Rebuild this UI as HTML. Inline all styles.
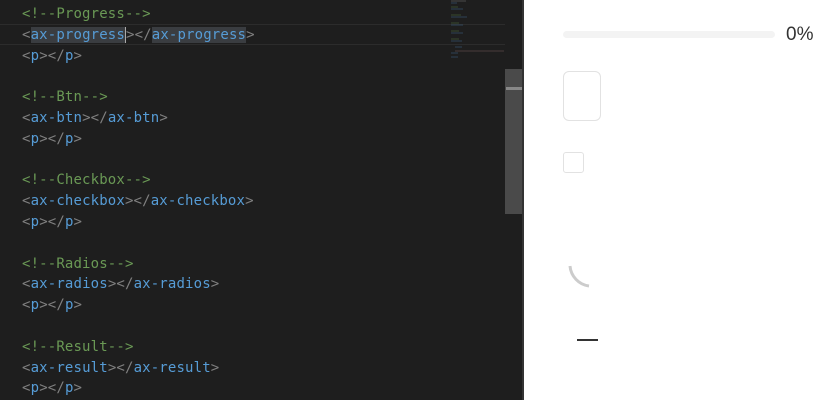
<!DOCTYPE html><html><head><style>
body{margin:0;width:840px;height:400px;background:#fff;position:relative;overflow:hidden;font-family:"DejaVu Sans Mono",monospace}
#ed{position:absolute;left:0;top:0;width:522px;height:400px;background:#1e1e1e}
.cl{position:absolute;left:0;top:24px;width:505px;height:19px;border-top:1px solid #2c2c2c;border-bottom:1px solid #2c2c2c}
pre{position:absolute;left:22px;top:4px;margin:0;font-size:14px;letter-spacing:0.15px;line-height:20.8px;color:#808080;font-family:"DejaVu Sans Mono",monospace}
.c{color:#6a9955}.t{color:#569cd6}.s{background:#3a3d41}
#sb{position:absolute;left:505px;top:69px;width:17px;height:145px;background:#4a4a4a}
#dv{position:absolute;left:522px;top:0;width:2px;height:400px;background:#333}
</style></head><body>
<div id="ed"><div class="cl"></div>
<pre><span class="c">&lt;!--Progress--&gt;</span>
&lt;<span class="t s">ax-progress</span><span style="border-left:1px solid #aaa">&gt;</span>&lt;/<span class="t s">ax-progress</span>&gt;
&lt;<span class="t">p</span>&gt;&lt;/<span class="t">p</span>&gt;

<span class="c">&lt;!--Btn--&gt;</span>
&lt;<span class="t">ax-btn</span>&gt;&lt;/<span class="t">ax-btn</span>&gt;
&lt;<span class="t">p</span>&gt;&lt;/<span class="t">p</span>&gt;

<span class="c">&lt;!--Checkbox--&gt;</span>
&lt;<span class="t">ax-checkbox</span>&gt;&lt;/<span class="t">ax-checkbox</span>&gt;
&lt;<span class="t">p</span>&gt;&lt;/<span class="t">p</span>&gt;

<span class="c">&lt;!--Radios--&gt;</span>
&lt;<span class="t">ax-radios</span>&gt;&lt;/<span class="t">ax-radios</span>&gt;
&lt;<span class="t">p</span>&gt;&lt;/<span class="t">p</span>&gt;

<span class="c">&lt;!--Result--&gt;</span>
&lt;<span class="t">ax-result</span>&gt;&lt;/<span class="t">ax-result</span>&gt;
&lt;<span class="t">p</span>&gt;&lt;/<span class="t">p</span>&gt;</pre>
<svg style="position:absolute;left:440px;top:0" width="65" height="60" opacity="0.6">
<g stroke-width="1">
<line x1="11" y1="1" x2="26" y2="1" stroke="#666"/>
<line x1="11" y1="3" x2="17" y2="3" stroke="#3a5a7a"/>
<line x1="11" y1="7" x2="18" y2="7" stroke="#4a6a3a"/>
<line x1="11" y1="9" x2="23" y2="9" stroke="#3a5a7a"/>
<line x1="11" y1="15" x2="21" y2="15" stroke="#4a6a3a"/>
<line x1="11" y1="17" x2="27" y2="17" stroke="#3a5a7a"/>
<line x1="11" y1="23" x2="19" y2="23" stroke="#4a6a3a"/>
<line x1="11" y1="25" x2="23" y2="25" stroke="#3a5a7a"/>
<line x1="11" y1="31" x2="19" y2="31" stroke="#4a6a3a"/>
<line x1="11" y1="33" x2="23" y2="33" stroke="#3a5a7a"/>
<line x1="11" y1="39" x2="19" y2="39" stroke="#4a6a3a"/>
<line x1="11" y1="41" x2="22" y2="41" stroke="#3a5a7a"/>
<line x1="15" y1="47" x2="22" y2="47" stroke="#3a5a7a"/>
<line x1="15" y1="51" x2="64" y2="51" stroke="#6a5050"/>
<line x1="11" y1="53" x2="18" y2="53" stroke="#3a5a7a"/>
<line x1="11" y1="57" x2="18" y2="57" stroke="#3a5a7a"/>
</g></svg>
</div>
<div id="sb"><div style="position:absolute;left:1px;top:18px;width:16px;height:3px;background:#888"></div></div>
<div id="dv"></div>
<div style="position:absolute;left:563px;top:31px;width:212px;height:7px;border-radius:4px;background:#f3f3f3"></div>
<div style="position:absolute;left:786px;top:24px;font:19px 'Liberation Sans',sans-serif;color:#333">0%</div>
<div style="position:absolute;left:563px;top:71px;width:36px;height:48px;border:1px solid #e2e2e2;border-radius:6px"></div>
<div style="position:absolute;left:563px;top:152px;width:19px;height:19px;border:1px solid #e2e2e2;border-radius:3px"></div>
<svg style="position:absolute;left:560px;top:250px" width="40" height="45"><path d="M10 16 A22 22 0 0 0 29 36" fill="none" stroke="#ccc" stroke-width="3"/></svg>
<div style="position:absolute;left:577px;top:339px;width:21px;height:2px;background:#333"></div>
</body></html>
